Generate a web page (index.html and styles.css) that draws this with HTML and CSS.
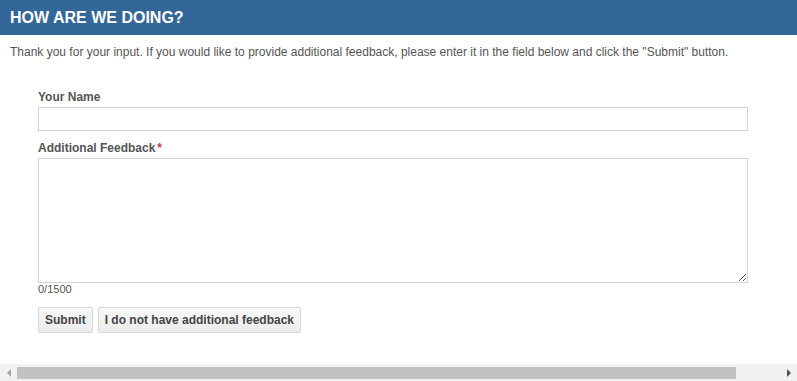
FILE: index.html
```html
<!DOCTYPE html>
<html lang="en">
<head>
  <meta charset="UTF-8">
  <meta name="viewport" content="width=device-width, initial-scale=1.0">
  <title>How Are We Doing?</title>
  <link rel="stylesheet" href="styles.css">
</head>
<body>
  <div class="viewport">
    <div class="page">
      <h1 class="banner">HOW ARE WE DOING?</h1>
      <p class="intro">Thank you for your input. If you would like to provide additional feedback, please enter it in the field below and click the "Submit" button.</p>

      <form class="feedback-form">
        <label for="yourName">Your Name</label>
        <input type="text" id="yourName">

        <label for="feedback" class="gap-top">Additional Feedback<span class="req">*</span></label>
        <textarea id="feedback" maxlength="1500"></textarea>
        <div class="counter">0/1500</div>

        <div class="button-group">
          <button type="submit">Submit</button>
          <button type="button">I do not have additional feedback</button>
        </div>
      </form>
    </div>
  </div>

  <!-- horizontal scrollbar of the frame -->
  <div class="hscroll">
    <span class="arrow arrow-left"></span>
    <div class="track"><div class="thumb"></div></div>
    <span class="arrow arrow-right"></span>
  </div>
</body>
</html>
```

FILE: styles.css
```css
html, body {
  margin: 0;
  padding: 0;
  height: 100%;
}

body {
  font-family: "Liberation Sans", Arial, sans-serif;
  color: #555;
  background: #fff;
  display: flex;
  flex-direction: column;
  overflow: hidden;
}

.viewport {
  flex: 1;
  overflow: hidden;
}

.page {
  width: 846px;
}

.banner {
  margin: 0;
  height: 35px;
  line-height: 35px;
  padding-left: 10px;
  background: #336699;
  color: #fff;
  font-size: 16px;
  font-weight: bold;
}

.intro {
  margin: 9px 0 0 10px;
  font-size: 12px;
  line-height: 16px;
}

.feedback-form {
  display: flex;
  flex-direction: column;
  align-items: flex-start;
  padding: 30px 0 0 38px;
}

label {
  font-size: 12px;
  line-height: 15px;
  font-weight: bold;
  margin-bottom: 2px;
}

label.gap-top {
  margin-top: 10px;
}

.req {
  color: #d2334a;
  margin-left: 2px;
}

input, textarea {
  box-sizing: border-box;
  width: 710px;
  border: 1px solid #d4d4d4;
  border-radius: 0;
  padding: 3px 5px;
  font-family: inherit;
  font-size: 12px;
  margin: 0;
}

input {
  height: 24px;
}

textarea {
  height: 125px;
  resize: vertical;
  display: block;
}

.counter {
  font-size: 11px;
  line-height: 13px;
  margin-top: 0;
}

.button-group {
  display: flex;
  gap: 5px;
  margin-top: 11px;
}

button {
  height: 26px;
  padding: 0 6px;
  border: 1px solid #d8d8d8;
  border-radius: 2px;
  background: linear-gradient(to bottom, #f8f8f8, #ececec);
  color: #444;
  font-family: inherit;
  font-size: 12px;
  font-weight: bold;
  cursor: pointer;
}

.hscroll {
  height: 17px;
  flex-shrink: 0;
  display: flex;
  align-items: center;
  background: #f1f1f1;
  margin-top: 1px;
}

.track {
  flex: 1;
  height: 100%;
  display: flex;
  align-items: center;
}

.thumb {
  width: 719px;
  height: 12px;
  background: #c1c1c1;
}

.arrow {
  width: 17px;
  height: 17px;
  display: flex;
  align-items: center;
  justify-content: center;
}

.arrow::before {
  content: "";
  border-top: 4px solid transparent;
  border-bottom: 4px solid transparent;
}

.arrow-left::before {
  border-right: 4px solid #a3a3a3;
}

.arrow-right::before {
  border-left: 4px solid #505050;
}
```
